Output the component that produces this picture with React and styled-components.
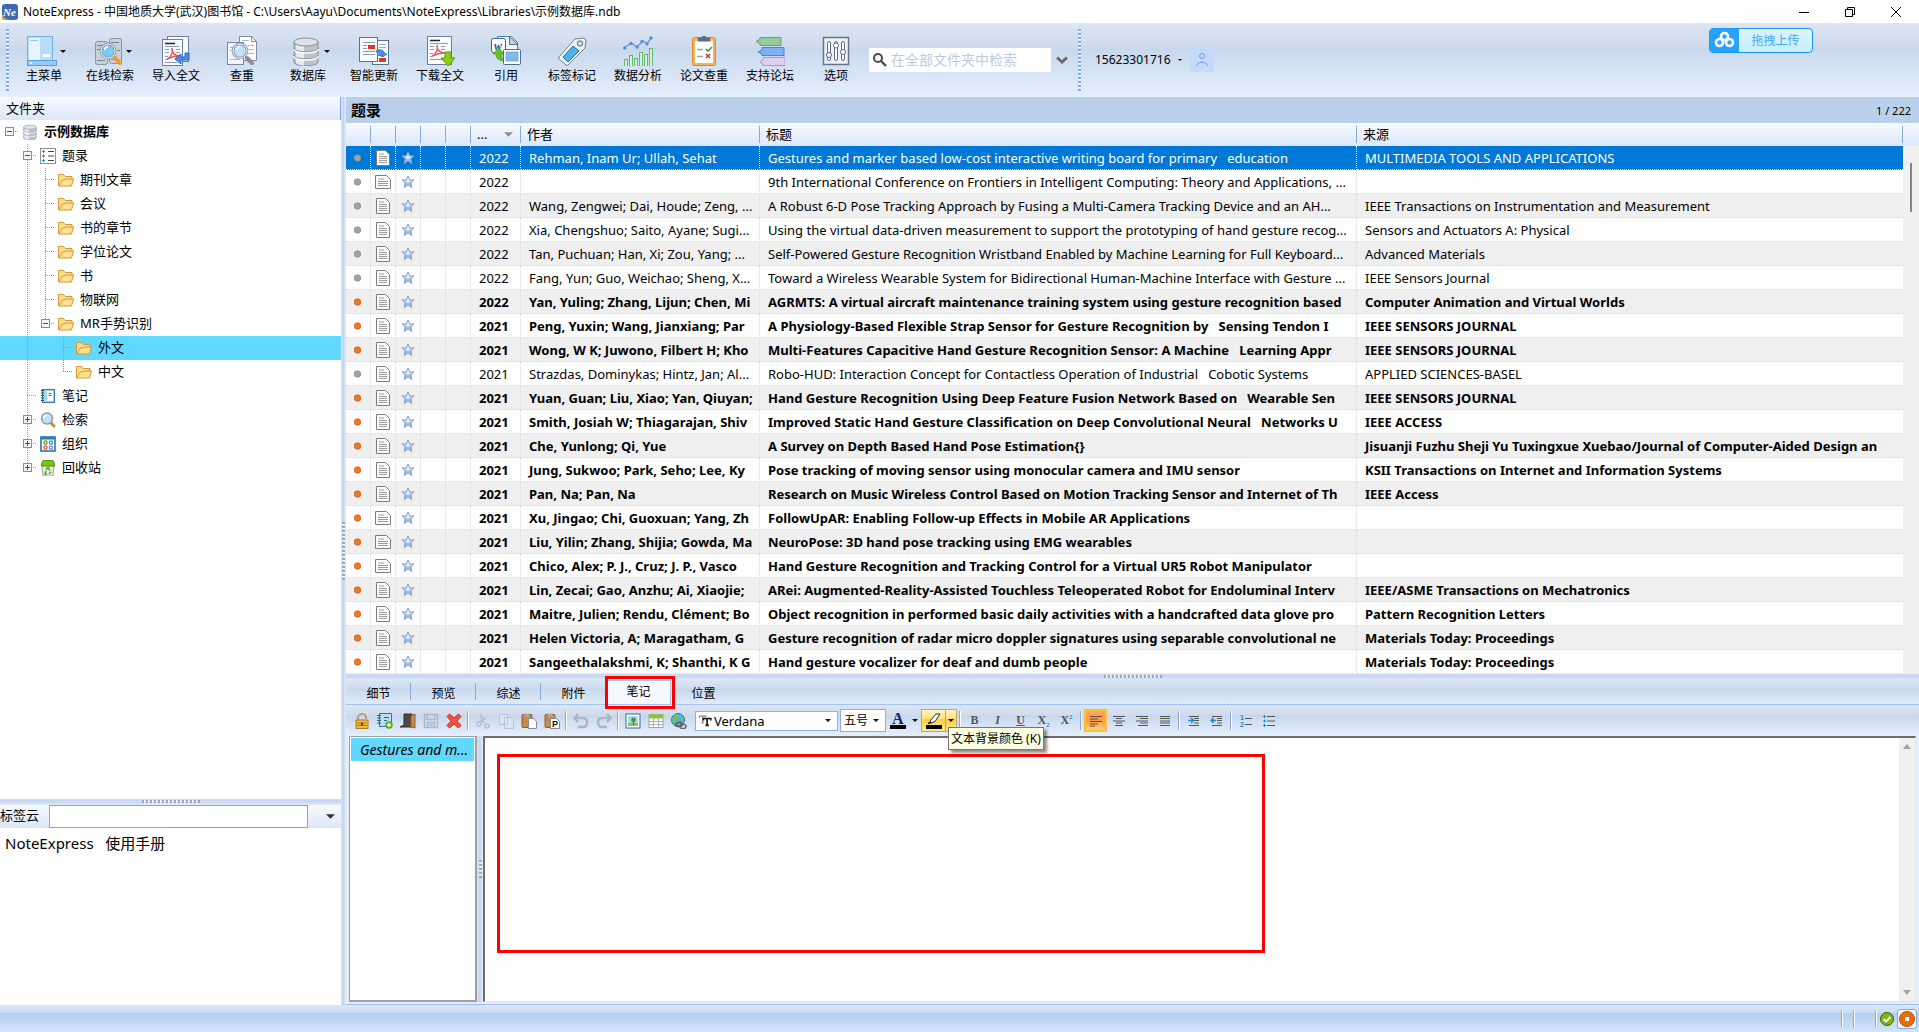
import styled, { createGlobalStyle, css } from "styled-components";

const GlobalStyle = createGlobalStyle`
  *{ box-sizing: border-box; }
  body{
    margin: 0;
    background: #fff;
    color: #000;
    font-family: "Noto Sans", "Noto Sans CJK SC", sans-serif;
    font-size: 13px;
  }
  button, input, select{
    font: inherit;
    color: inherit;
    padding: 0;
    margin: 0;
  }
  button{
    border: 0;
    background: none;
  }
  svg{ display: block; flex: none; }
`;

const glossy = css`
  background: linear-gradient(#dce6f3 0%, #cfdcee 32%, #c7d7ec 33%, #e5f0fd 100%);
`;

const AppStyled = styled.div`
  display: flex;
  flex-direction: column;
  height: 100vh;
  overflow: hidden;
`;

const TitleBar = styled.header`
  display: flex;
  align-items: center;
  flex: none;
  height: 23px;
  padding-left: 2px;
  h1{
    flex: 1;
    margin: 0;
    padding-left: 5px;
    font-size: 12px;
    font-weight: 400;
    line-height: 22px;
  }
`;

const WindowButton = styled.button`
  display: flex;
  justify-content: center;
  align-items: center;
  width: 46px;
  height: 21px;
`;

const Ribbon = styled.nav`
  ${glossy}
  position: relative;
  display: flex;
  align-items: center;
  flex: none;
  height: 74px;
  padding-left: 6px;
`;

const Grip = styled.span`
  flex: none;
  width: 3px;
  height: 62px;
  background: repeating-linear-gradient(#8aa9d6 0 2px, #fff 2px 3px, transparent 3px 4px);
`;

const RibbonItem = styled.button`
  display: flex;
  flex-direction: column;
  align-items: center;
  width: 66px;
  gap: 1px;
  font-size: 12px;
  line-height: 18px;
  white-space: nowrap;
  span{
    display: flex;
    align-items: center;
    gap: 3px;
    padding-left: ${(p) => (p.$menu ? 4 : 0)}px;
  }
`;

const RibbonItems = styled.div`
  display: flex;
  padding: 1px 0 0 2px;
`;

const SearchBox = styled.label`
  display: flex;
  align-items: center;
  width: 182px;
  height: 24px;
  padding-left: 4px;
  gap: 4px;
  background: #fff;
  input{
    flex: 1;
    min-width: 0;
    border: 0;
    outline: 0;
    font-size: 14px;
    line-height: 22px;
    background: none;
  }
  input::placeholder{ color: #bccadb; opacity: 1; }
`;

const ChevronButton = styled.button`
  width: 27px;
  padding-left: 5px;
`;

const Account = styled.button`
  display: flex;
  align-items: center;
  gap: 7px;
  padding: 0 8px 0 14px;
  font-size: 12px;
  line-height: 24px;
`;

const Avatar = styled.button`
  display: flex;
  justify-content: center;
  align-items: center;
  width: 24px;
  height: 24px;
  background: #c5d9fa;
`;

const UploadButton = styled.button`
  position: absolute;
  top: 5px;
  right: 106px;
  display: flex;
  width: 104px;
  height: 25px;
  border: 1px solid #1e97fb;
  border-radius: 4px;
  overflow: hidden;
  background: linear-gradient(#dff3fe, #c4ecfd);
  color: #43aaf8;
  font-size: 12px;
  line-height: 23px;
  svg{ background: #24a2fe; }
  span{ flex: 1; }
`;

const Main = styled.main`
  display: flex;
  flex: 1;
  min-height: 0;
`;

const Sidebar = styled.aside`
  display: flex;
  flex-direction: column;
  flex: none;
  width: 341px;
`;

const PanelHeader = styled.h2`
  flex: none;
  height: 23px;
  margin: 0;
  padding-left: 6px;
  background: linear-gradient(#f7faff, #dbe7f9);
  border-right: 1px solid #8aa9d6;
  font-size: 13px;
  font-weight: 400;
  line-height: 23px;
`;

const TreeList = styled.ul`
  flex: 1;
  min-height: 0;
  margin: 0;
  padding: 0;
  list-style: none;
  overflow: hidden;
`;

const TreeRow = styled.li`
  display: flex;
  align-items: center;
  height: 24px;
  background: ${(p) => (p.$selected ? "#61d8ff" : "none")};
  font-weight: ${(p) => (p.$root ? 700 : 400)};
  line-height: 22px;
  > svg:last-of-type{ margin: 0 6px 0 4px; }
  span{ height: 24px; }
`;

const Splitter = styled.div`
  display: flex;
  justify-content: center;
  flex: none;
  ${(p) =>
    p.$vertical
      ? css`
          align-items: center;
          width: ${p.$size}px;
          background: linear-gradient(90deg, #d5e3f6, #c3d6f0 50%, #e6effb);
        `
      : css`
          align-items: flex-start;
          height: 6px;
          padding-top: 1px;
          background: linear-gradient(#cbdbf0, #c5d7f0 40%, #e0eafa);
        `}
  &::after{
    content: "";
    ${(p) =>
      p.$vertical
        ? css`
            width: 3px;
            height: ${p.$grip}px;
            background: repeating-linear-gradient(#8aa9d6 0 2px, #fff 2px 3px, transparent 3px 4px);
          `
        : css`
            width: 58px;
            height: 3px;
            background: repeating-linear-gradient(90deg, #8aa9d6 0 2px, #fff 2px 3px, transparent 3px 4px);
          `}
  }
`;

const TagBar = styled.div`
  display: flex;
  align-items: center;
  flex: none;
  height: 23px;
  background: linear-gradient(#f7faff, #dbe7f9);
  line-height: 21px;
  label{ width: 49px; height: 23px; white-space: nowrap; }
  input{
    flex: 1;
    min-width: 0;
    height: 23px;
    border: 1px solid #a0a0a0;
    background: #fff;
  }
  button{
    display: flex;
    justify-content: center;
    width: 33px;
    padding-left: 11px;
  }
`;

const TagCloud = styled.div`
  flex: none;
  height: 177px;
  padding: 3px 5px;
  font-size: 15px;
  line-height: 24px;
  white-space: pre;
`;

const Content = styled.section`
  display: flex;
  flex-direction: column;
  flex: 1;
  min-width: 0;
`;

const ContentHeader = styled.div`
  display: flex;
  justify-content: space-between;
  align-items: center;
  flex: none;
  height: 26px;
  padding: 0 8px 0 5px;
  background: #bacfea;
  font-size: 11px;
  h2{
    margin: 0;
    font-size: 15px;
    font-weight: 700;
    line-height: 24px;
  }
`;

const RecordPane = styled.div`
  display: flex;
  flex: none;
  background: linear-gradient(#f7faff, #dbe7f9 23px, #f0f0f0 23px);
`;

const RecordTable = styled.table`
  flex: 1;
  min-width: 0;
  width: 100%;
  table-layout: fixed;
  border-spacing: 0;
  background: #fff;
  th{
    height: 23px;
    padding: 0 0 0 6px;
    background: linear-gradient(90deg, #8aa9d6, #8aa9d6) right 3px / 1px 17px no-repeat,
      linear-gradient(#f7faff, #dbe7f9);
    background-position: right 3px, 0 0;
    background-size: 1px 17px, 100% 100%;
    font-weight: 400;
    line-height: 23px;
    text-align: left;
  }
  th svg{ float: right; margin: 9px 8px 0 0; }
`;

const RecordRow = styled.tr`
  background: ${(p) => (p.$selected ? "#0078d7" : p.$odd ? "#efefef" : "#fff")};
  color: ${(p) => (p.$selected ? "#fff" : "#000")};
  font-weight: ${(p) => (p.$unread ? 700 : 400)};
  td{
    height: 24px;
    padding: 0 4px 0 8px;
    border-right: 1px dotted ${(p) => (p.$selected ? "#fff" : "#dcdcdc")};
    border-bottom: 1px dotted #dcdcdc;
    background-clip: padding-box;
    line-height: 22px;
    white-space: pre;
    overflow: hidden;
  }
  td:last-child{ border-right: 0; }
`;

const IconCell = styled.span`
  display: flex;
  justify-content: center;
  margin: 0 -4px 0 -8px;
`;

const Scrollbar = styled.div`
  display: flex;
  flex-direction: column;
  align-items: center;
  justify-content: space-between;
  flex: none;
  width: 16px;
  padding: ${(p) => p.$pad};
`;

const Thumb = styled.span`
  width: 2px;
  height: 49px;
  background: #858585;
`;

const TabBar = styled.div`
  display: flex;
  align-items: flex-end;
  flex: none;
  height: 25px;
  border-bottom: 1px solid #a3c4ee;
  background: linear-gradient(#dbe6f4, #c9d9ed 40%, #e0ebfa);
`;

const Tab = styled.button`
  position: relative;
  width: 65px;
  height: 24px;
  padding-top: 4px;
  font-size: 12px;
  line-height: 20px;
  ${(p) =>
    p.$divider &&
    css`
      background: linear-gradient(#8aa9d6, #8aa9d6) right 3px / 1px 17px no-repeat;
    `}
  ${(p) =>
    p.$active &&
    css`
      padding: 0 0 2px;
      border: 1px solid #a3c4ee;
      border-bottom: 0;
      background: #f5f9ff;
    `}
`;

const TabMark = styled.span`
  position: absolute;
  inset: -5px -5px -5px -2px;
  border: 3px solid #f00;
`;

const EditorBar = styled.div`
  ${glossy}
  display: flex;
  align-items: center;
  flex: none;
  height: 31px;
  padding-left: 4px;
`;

const ToolButton = styled.button`
  display: flex;
  justify-content: center;
  align-items: center;
  width: 23px;
  height: 23px;
  ${(p) =>
    p.$active &&
    css`
      border: 2px solid #f5c33b;
      background: linear-gradient(#fda95f, #fb9a3e 50%, #fdd27e);
    `}
`;

const SplitTool = styled.div`
  position: relative;
  display: flex;
  align-items: center;
  width: 35px;
  height: 23px;
  ${(p) =>
    p.$hot &&
    css`
      width: 36px;
      border: 1px solid #c2a661;
      background: linear-gradient(#fff5c9, #ffe17a 40%, #ffcf3f 45%, #ffe98f);
      button + button{ border-left: 1px solid #c2a661; height: 21px; }
    `}
  > button + button{
    display: flex;
    justify-content: center;
    align-items: center;
    width: 11px;
  }
`;

const Separator = styled.i`
  width: 2px;
  height: 19px;
  margin: 0 2px;
  border-left: 1px solid #8aa9d6;
  background: #fff;
`;

const ComboBox = styled.label`
  display: flex;
  align-items: center;
  width: ${(p) => p.$width}px;
  height: ${(p) => p.$height}px;
  margin-left: ${(p) => p.$gap}px;
  padding: 0 6px 0 3px;
  gap: 2px;
  border: 1px solid #8fb0de;
  background: #fff;
  select{
    flex: 1;
    min-width: 0;
    border: 0;
    padding: 0;
    outline: 0;
    appearance: none;
    background: none;
    font-size: ${(p) => p.$font}px;
  }
`;

const Tooltip = styled.span`
  position: absolute;
  top: 17px;
  left: 26px;
  z-index: 2;
  padding: 0 2px;
  border: 1px solid #767676;
  background: #ffffe1;
  box-shadow: 3px 3px 3px rgba(0, 0, 0, .45);
  font-size: 12px;
  line-height: 21px;
  white-space: nowrap;
`;

const NotesArea = styled.div`
  display: flex;
  flex: 1;
  min-height: 0;
  padding: 0 3px 2px 3px;
  background: #e3edfb;
  border-bottom: 1px solid #9fc0ee;
`;

const NoteList = styled.ul`
  flex: none;
  width: 128px;
  margin: 0;
  padding: 1px;
  border: 1px solid #a0a0a0;
  border-right-width: 2px;
  border-bottom-width: 2px;
  background: #fff;
  list-style: none;
`;

const NoteItem = styled.li`
  height: 23px;
  padding-left: 9px;
  background: #61d8ff;
  font-size: 14px;
  font-style: italic;
  line-height: 23px;
  white-space: nowrap;
`;

const Editor = styled.div`
  display: flex;
  flex: 1;
  min-width: 0;
  border: 1px solid #e3e3e3;
  border-top: 2px solid #6d6d6d;
  border-left: 2px solid #6d6d6d;
  background: linear-gradient(#f0f0f0, #f0f0f0) right / 16px 100% no-repeat, #fff;
`;

const Page = styled.div`
  flex: 1;
  min-width: 0;
  padding: 16px 0 0 12px;
`;

const PageMark = styled.div`
  width: 768px;
  max-width: 100%;
  height: 199px;
  border: 3px solid #f00;
`;

const StatusBar = styled.footer`
  display: flex;
  justify-content: flex-end;
  align-items: center;
  flex: none;
  height: 27px;
  padding-right: 2px;
  background: linear-gradient(#dbe7f7 0, #c8daf3 8px, #b1cef3 8px, #d5e4f8 100%);
`;

const StatusCell = styled.span`
  width: ${(p) => p.$width}px;
  height: 17px;
  border-left: 1px solid #8aa9d6;
  box-shadow: inset 1px 0 #fff;
`;

const StatusButton = styled.button`
  display: flex;
  justify-content: center;
  align-items: center;
  width: 20px;
  height: 20px;
  border: ${(p) => (p.$boxed ? "1px solid #8aa9d6" : "0")};
  border-radius: 3px;
  background: ${(p) => (p.$boxed ? "#f3f7fd" : "none")};
`;

const Arrow = ({ w = 6, color = "#111" }) => (
  <svg width={w} height={Math.ceil(w / 2)} viewBox="0 0 6 3">
    <path d="M0 0h6L3 3z" fill={color} />
  </svg>
);

const Icon = ({ size = 30, children, box = size }) => (
  <svg width={size} height={size} viewBox={`0 0 ${box} ${box}`} fill="none" aria-hidden="true">
    {children}
  </svg>
);

const Paper = ({ x = 3, y = 2, w = 21, h = 27 }) => (
  <>
    <rect x={x + 0.5} y={y + 0.5} width={w} height={h} fill="#fbfcff" stroke="#6b7f9c" />
    <path d={`M${x + 3} ${y + 4.5}h10`} stroke="#222" strokeWidth="1.500" />
    <path
      d={`M${x + 3} ${y + 7.5}h${w - 6}M${x + 3} ${y + 10.5}h4M${x + 3} ${y + 13.5}h4M${x + 14} ${y + 10.5}h4M${x + 14} ${y + 13.5}h4M${x + 3} ${y + 17.5}h3M${x + 3} ${y + 20.5}h3M${x + 3} ${y + 23.5}h12`}
      stroke="#8c9cb5"
    />
    <path
      d={`M${x + 5} ${y + 20}c4-2 6-6 5-11c0 5 3 8 8 8c-5 0-9 1-13 3z`}
      stroke="#e8585a"
      strokeWidth="1.400"
    />
  </>
);

const Lens = ({ cx, cy, r, fill = "#6fcdf6", handle = "#f59a2a" }) => (
  <>
    <path d={`M${cx + r} ${cy + r}l5 5`} stroke={handle} strokeWidth="4" strokeLinecap="round" />
    <circle cx={cx} cy={cy} r={r} fill={fill} fillOpacity=".9" stroke="#8492a4" strokeWidth="2.600" />
    <circle cx={cx} cy={cy} r={r} stroke="#f4f8fc" />
    <path d={`M${cx - r / 2} ${cy - 1}q1-${r / 2} ${r / 2}-${r / 2}`} stroke="#fff" strokeWidth="1.500" />
  </>
);

const Cylinder = () => (
  <>
    <path d="M3 6v20c0 5 24 5 24 0V6" fill="#bcc3cc" stroke="#868e99" />
    <path d="M5 8v19c2 2 7 2.500 8 2.500V10z" fill="#e8ecf0" />
    <ellipse cx="15" cy="6" rx="12" ry="4" fill="#dfe3e8" stroke="#868e99" />
    <path d="M3 13c0 5 24 5 24 0M3 20c0 5 24 5 24 0" stroke="#fff" strokeWidth="2" />
    <path d="M3 12c0 5 24 5 24 0M3 19c0 5 24 5 24 0" stroke="#8b939e" />
  </>
);

const ribbonIcons = {
  menu: (
    <>
      <rect x="0.500" y="0.500" width="25" height="24" fill="#b9dcfb" stroke="#77b1e4" />
      <rect x="2" y="2" width="11" height="22" fill="#e7f5ff" />
      <path d="M3 4.500h8" stroke="#8ec5f2" />
      <rect x="16" y="18" width="7" height="3" fill="#fff" />
      <rect x="0.500" y="24.500" width="29" height="5" fill="#93cbf8" stroke="#5d9fd8" />
      <circle cx="4" cy="27" r="1" fill="#fff" />
    </>
  ),
  online: (
    <>
      <rect x="2.500" y="5.500" width="12" height="23" rx="2" fill="#c8d0d9" stroke="#8b96a3" />
      <rect x="16.500" y="2.500" width="12" height="25" rx="2" fill="#c8d0d9" stroke="#8b96a3" />
      <path d="M4 9.500h8M4 13.500h8M4 24.500h8M18 6.500h8M18 23.500h8M24 14.500h3" stroke="#77828f" />
      <Lens cx={15} cy={15} r={7} />
    </>
  ),
  import: (
    <>
      <rect x="6.500" y="0.500" width="21" height="25" fill="#fbfcff" stroke="#6b7f9c" />
      <Paper x={1} y={3} w={20} h={26} />
      <path d="M28 17v7h-8v4l-6-5 6-5v3h4v-4z" fill="#4d8bea" stroke="#2c60bd" />
    </>
  ),
  check: (
    <>
      <path d="M12.500 0.500h12l5 5v19h-17z" fill="#fdfdff" stroke="#7b8ba3" />
      <path d="M24.500 0.500v5h5" stroke="#7b8ba3" />
      <rect x="0.500" y="6.500" width="16" height="22" fill="#f3f6fb" stroke="#7b8ba3" />
      <path d="M3 11.500h8M3 14.500h6M3 23.500h10M15 4.500h7M20 9.500h7M20 13.500h7M20 17.500h7" stroke="#aab8cc" />
      <Lens cx={13} cy={15} r={7} fill="#bfe0f6" handle="#8c8c8c" />
    </>
  ),
  database: <Cylinder />,
  update: (
    <>
      <rect x="13.500" y="4.500" width="16" height="24" fill="#fbfcff" stroke="#5f7089" />
      <rect x="20" y="22" width="7" height="4" fill="#dd3a1a" />
      <path d="M20 8.500h7M20 11.500h7M16 23.500h3" stroke="#9babc4" />
      <rect x="0.500" y="1.500" width="18" height="24" fill="#fbfcff" stroke="#5f7089" />
      <path d="M4 6.500h12M4 9.500h4M4 12.500h4M4 15.500h12M4 18.500h12" stroke="#8c9cb5" />
      <rect x="9" y="9" width="7" height="4" fill="#dd3a1a" />
      <path d="M18 14c5-1 7 1 8 4h2l-4 3-5-2h2c-1-2-2-3-4-3z" fill="#4d8bea" stroke="#2c60bd" strokeWidth=".7" />
    </>
  ),
  download: (
    <>
      <Paper x={2} y={0} w={24} h={28} />
      <path d="M20 16h6v6h4l-7 8-7-8h4z" fill="#8bcf14" stroke="#5b9a0b" />
    </>
  ),
  cite: (
    <>
      <path d="M6.500 0.500h14l6 6v11h-20z" fill="#f5f9ff" stroke="#54739c" />
      <path d="M18.500 0.500v8h8z" fill="#bcd4ef" stroke="#54739c" />
      <rect x="0.500" y="2.500" width="14" height="14" rx="2" fill="#fff" stroke="#3a5eae" />
      <text x="3" y="14" fontSize="12" fontWeight="700" fontStyle="italic" fill="#2b4ea2" fontFamily="Liberation Serif">w</text>
      <path d="M8 12l5 6h-3c0 3 2 6 4 7-6 0-9-3-9-7H2z" fill="#67c419" stroke="#3f8e10" strokeWidth=".7" />
      <rect x="12.500" y="13.500" width="17" height="15" rx="1" fill="#fff" stroke="#4a6b94" />
      <rect x="15" y="16" width="12" height="9" fill="#7dbbe9" stroke="#5c8ebb" strokeWidth=".6" />
    </>
  ),
  tag: (
    <>
      <path d="M2 21L18 3l9-1 2 3-1 7L11 29q-1 1-2 0l-7-6q-1-1 0-2z" fill="#f1f3f7" stroke="#77818e" />
      <circle cx="23" cy="7.500" r="2.500" fill="#dfe7f1" stroke="#8b93a0" strokeWidth="1.500" />
      <path d="M6 21L16 10l6 5-11 11z" fill="#4fb2ea" stroke="#1b6fae" />
    </>
  ),
  stats: (
    <>
      <path d="M1 12l7-5 6 4 6-6 4 3 4-6" stroke="#6b97da" strokeWidth="1.400" />
      <g fill="#5b8cd8">
        <circle cx="1.700" cy="12" r="1.700" /><circle cx="8" cy="7.500" r="1.700" /><circle cx="14" cy="11" r="1.700" />
        <circle cx="19" cy="5.500" r="1.700" /><circle cx="24" cy="8" r="1.700" /><circle cx="28" cy="2" r="1.700" />
      </g>
      <g fill="#d6f0d3" stroke="#65b877">
        <rect x="1.500" y="23.500" width="3" height="7" /><rect x="6.500" y="19.500" width="3" height="11" />
        <rect x="11.500" y="22.500" width="3" height="8" /><rect x="16.500" y="16.500" width="3" height="14" />
        <rect x="21.500" y="18.500" width="3" height="12" /><rect x="26.500" y="12.500" width="3" height="18" />
      </g>
    </>
  ),
  clipboard: (
    <>
      <rect x="3.500" y="1.500" width="23" height="28" rx="2" fill="#f4b25c" stroke="#d98b2b" />
      <rect x="6" y="5" width="18" height="22" fill="#fff" />
      <path d="M9 1.500h4a2 2 0 0 1 4 0h4v4H9z" fill="#5d6c83" />
      <path d="M8 13.500h6M8 20.500h6" stroke="#9aa5b4" strokeWidth="1.500" />
      <path d="M17 13l2 2 4-4" stroke="#32a35b" strokeWidth="1.600" />
      <path d="M17 18l4 4m0-4l-4 4" stroke="#dd3333" strokeWidth="1.600" />
    </>
  ),
  forum: (
    <>
      <path d="M1 5.500l4-2V1.500h21v8H5V7.500z" fill="#93cb9b" stroke="#5fa56c" />
      <path d="M3 16l4-2v-2.500h22v8H7V18z" fill="#80b0ef" stroke="#4d84cc" />
      <path d="M5 26l3-2v-2.500h22v8H8V28z" fill="#dccff0" stroke="#ab94cf" />
    </>
  ),
  options: (
    <>
      <rect x="2.500" y="1.500" width="25" height="27" fill="#eef2f8" stroke="#65748b" strokeWidth="1.500" />
      <g fill="#fff" stroke="#5c6b82">
        <rect x="6.500" y="5.500" width="3" height="19" rx="1.500" /><rect x="13.500" y="5.500" width="3" height="19" rx="1.500" />
        <rect x="20.500" y="5.500" width="3" height="19" rx="1.500" />
        <circle cx="8" cy="19" r="2.500" /><circle cx="15" cy="9.500" r="2.500" /><circle cx="22" cy="16" r="2.500" />
      </g>
    </>
  ),
};

const ribbon = [
  ["menu", "主菜单", true],
  ["online", "在线检索", true],
  ["import", "导入全文"],
  ["check", "查重"],
  ["database", "数据库", true],
  ["update", "智能更新"],
  ["download", "下载全文"],
  ["cite", "引用"],
  ["tag", "标签标记"],
  ["stats", "数据分析"],
  ["clipboard", "论文查重"],
  ["forum", "支持论坛"],
  ["options", "选项"],
];

const treeIcons = {
  database: <g transform="scale(.53)"><Cylinder /></g>,
  list: (
    <>
      <rect x="0.500" y="0.500" width="15" height="15" fill="#fff" stroke="#909090" />
      <path d="M8 3.500h6M8 8h6M8 12.500h6" stroke="#444" />
      <path d="M3.500 2v3M3.500 6.500v3M3.500 11v3M2 3.500h3M2 8h3M2 12.500h3" stroke="#2e87c8" />
    </>
  ),
  folder: (
    <>
      <path d="M0.500 14V2.500h5l1.500 2h7V7" fill="#fbdc8c" stroke="#d29a3c" />
      <path d="M0.500 14L4 8.500l4-1.500h7.500l-2 7z" fill="#ffe08a" stroke="#d29a3c" />
    </>
  ),
  note: (
    <>
      <rect x="2.500" y="1.500" width="12" height="13" fill="#a9d4ef" stroke="#2f79ad" />
      <rect x="7" y="3" width="6" height="10" fill="#fff" />
      <path d="M8.500 5.500h3M8.500 7.500h3" stroke="#2f79ad" />
      <path d="M1 2.500h3M1 5h3M1 7.500h3M1 10h3M1 12.500h3" stroke="#345" />
    </>
  ),
  search: (
    <>
      <path d="M11 11l3 3" stroke="#c68a45" strokeWidth="3" strokeLinecap="round" />
      <circle cx="7" cy="6.500" r="5.500" fill="#bfe4f9" stroke="#8e99a5" strokeWidth="1.400" />
      <path d="M4 6q0-3 3-3" stroke="#fff" strokeWidth="1.400" />
    </>
  ),
  group: (
    <>
      <rect x="1" y="1" width="14" height="14" fill="#fff" stroke="#1f77ad" strokeWidth="1.600" />
      <path d="M1 2.500h14" stroke="#1f77ad" strokeWidth="2" />
      <circle cx="5.500" cy="6.500" r="1.600" stroke="#5b9a1a" strokeWidth="1.300" />
      <circle cx="11" cy="6.500" r="1.600" stroke="#3a8fd0" strokeWidth="1.300" />
      <circle cx="5.500" cy="11.500" r="1.600" stroke="#e0502e" strokeWidth="1.300" />
      <circle cx="11" cy="11.500" r="1.600" stroke="#8d6fd1" strokeWidth="1.300" />
    </>
  ),
  bin: (
    <>
      <path d="M2 6h12l-1 10H3z" fill="#e6ebe4" stroke="#9aa496" />
      <path d="M1.500 3.500l1.500-3h10l1.500 3v2.500h-13z" fill="#79c116" stroke="#579a0d" />
      <path d="M8 7.500l2 3M11 12l-2 2M7 14H5l1-3M6 10l2-2.500" stroke="#58a01b" strokeWidth="1.400" />
    </>
  ),
};

// guides: one letter per indent level, the last one belongs to the node itself
const tree = [
  ["r", "database", "示例数据库"],
  [" -", "list", "题录"],
  [" |t", "folder", "期刊文章"],
  [" |t", "folder", "会议"],
  [" |t", "folder", "书的章节"],
  [" |t", "folder", "学位论文"],
  [" |t", "folder", "书"],
  [" |t", "folder", "物联网"],
  [" |m", "folder", "MR手势识别"],
  [" | t", "folder", "外文"],
  [" | e", "folder", "中文"],
  [" t", "note", "笔记"],
  [" +", "search", "检索"],
  [" +", "group", "组织"],
  [" p", "bin", "回收站"],
];

const Guide = ({ kind }) => {
  const box = "r-m+p".includes(kind);
  return (
    <svg width="18" height="24" viewBox="0 0 18 24" shapeRendering="crispEdges">
      <g stroke={kind === " " ? "none" : "#9a9a9a"} strokeDasharray="1 1">
        {"|t-+".includes(kind) && <path d="M9.500 0v24" />}
        {"emp".includes(kind) && <path d="M9.500 0v12" />}
        {kind !== "|" && <path d="M9 11.500h9" />}
      </g>
      {box && (
        <>
          <rect x="5.500" y="7.500" width="8" height="8" fill="#f4f4f4" stroke="#8c8c8c" />
          <path d={"+p".includes(kind) ? "M7 11.500h5M9.500 9v5" : "M7 11.500h5"} stroke="#2f4f9f" />
        </>
      )}
    </svg>
  );
};

// year, authors, title, source, unread, landscape icon
const records = [
  ["2022", "Rehman, Inam Ur; Ullah, Sehat", "Gestures and marker based low-cost interactive writing board for primary   education", "MULTIMEDIA TOOLS AND APPLICATIONS", 0],
  ["2022", "", "9th International Conference on Frontiers in Intelligent Computing: Theory and Applications, ...", "", 0, 1],
  ["2022", "Wang, Zengwei; Dai, Houde; Zeng, ...", "A Robust 6-D Pose Tracking Approach by Fusing a Multi-Camera Tracking Device and an AH...", "IEEE Transactions on Instrumentation and Measurement", 0],
  ["2022", "Xia, Chengshuo; Saito, Ayane; Sugi...", "Using the virtual data-driven measurement to support the prototyping of hand gesture recog...", "Sensors and Actuators A: Physical", 0],
  ["2022", "Tan, Puchuan; Han, Xi; Zou, Yang; ...", "Self-Powered Gesture Recognition Wristband Enabled by Machine Learning for Full Keyboard...", "Advanced Materials", 0],
  ["2022", "Fang, Yun; Guo, Weichao; Sheng, X...", "Toward a Wireless Wearable System for Bidirectional Human-Machine Interface with Gesture ...", "IEEE Sensors Journal", 0],
  ["2022", "Yan, Yuling; Zhang, Lijun; Chen, Mi", "AGRMTS: A virtual aircraft maintenance training system using gesture recognition based", "Computer Animation and Virtual Worlds", 1],
  ["2021", "Peng, Yuxin; Wang, Jianxiang; Par", "A Physiology-Based Flexible Strap Sensor for Gesture Recognition by   Sensing Tendon I", "IEEE SENSORS JOURNAL", 1],
  ["2021", "Wong, W K; Juwono, Filbert H; Kho", "Multi-Features Capacitive Hand Gesture Recognition Sensor: A Machine   Learning Appr", "IEEE SENSORS JOURNAL", 1],
  ["2021", "Strazdas, Dominykas; Hintz, Jan; Al...", "Robo-HUD: Interaction Concept for Contactless Operation of Industrial   Cobotic Systems", "APPLIED SCIENCES-BASEL", 0],
  ["2021", "Yuan, Guan; Liu, Xiao; Yan, Qiuyan;", "Hand Gesture Recognition Using Deep Feature Fusion Network Based on   Wearable Sen", "IEEE SENSORS JOURNAL", 1],
  ["2021", "Smith, Josiah W; Thiagarajan, Shiv", "Improved Static Hand Gesture Classification on Deep Convolutional Neural   Networks U", "IEEE ACCESS", 1],
  ["2021", "Che, Yunlong; Qi, Yue", "A Survey on Depth Based Hand Pose Estimation{}", "Jisuanji Fuzhu Sheji Yu Tuxingxue Xuebao/Journal of Computer-Aided Design an", 1],
  ["2021", "Jung, Sukwoo; Park, Seho; Lee, Ky", "Pose tracking of moving sensor using monocular camera and IMU sensor", "KSII Transactions on Internet and Information Systems", 1],
  ["2021", "Pan, Na; Pan, Na", "Research on Music Wireless Control Based on Motion Tracking Sensor and Internet of Th", "IEEE Access", 1],
  ["2021", "Xu, Jingao; Chi, Guoxuan; Yang, Zh", "FollowUpAR: Enabling Follow-up Effects in Mobile AR Applications", "", 1, 1],
  ["2021", "Liu, Yilin; Zhang, Shijia; Gowda, Ma", "NeuroPose: 3D hand pose tracking using EMG wearables", "", 1, 1],
  ["2021", "Chico, Alex; P. J., Cruz; J. P., Vasco", "Hand Gesture Recognition and Tracking Control for a Virtual UR5 Robot Manipulator", "", 1, 1],
  ["2021", "Lin, Zecai; Gao, Anzhu; Ai, Xiaojie;", "ARei: Augmented-Reality-Assisted Touchless Teleoperated Robot for Endoluminal Interv", "IEEE/ASME Transactions on Mechatronics", 1],
  ["2021", "Maitre, Julien; Rendu, Clément; Bo", "Object recognition in performed basic daily activities with a handcrafted data glove pro", "Pattern Recognition Letters", 1],
  ["2021", "Helen Victoria, A; Maragatham, G", "Gesture recognition of radar micro doppler signatures using separable convolutional ne", "Materials Today: Proceedings", 1],
  ["2021", "Sangeethalakshmi, K; Shanthi, K G", "Hand gesture vocalizer for deaf and dumb people", "Materials Today: Proceedings", 1],
];

const Dot = ({ unread }) => (
  <svg width="8" height="8" viewBox="0 0 8 8">
    <circle cx="3.500" cy="4" r="3.200" fill={unread ? "#f97b0e" : "#a3a3a3"} stroke={unread ? "#d0572e" : "#8c8c8c"} strokeWidth=".8" />
  </svg>
);

const Doc = ({ wide }) => (
  <Icon size={16}>
    {wide ? (
      <>
        <path d="M0.500 1.500h11l4 4v9H0.500z" fill="#fdfdfd" stroke="#7d7d7d" />
        <path d="M3 5h6M3 7.500h10M3 9.500h10M3 11.500h10" stroke="#9a9a9a" />
      </>
    ) : (
      <>
        <path d="M1.500 0.500h9l4 4v11h-13z" fill="#fdfdfd" stroke="#7d7d7d" />
        <path d="M4 4h5M4 6.500h8M4 8.500h8M4 10.500h8M4 12.500h8" stroke="#9a9a9a" />
      </>
    )}
  </Icon>
);

const Star = () => (
  <Icon size={14}>
    <path d="M7 1l1.700 4H13L9.800 7.800l1.200 4.700-4-2.500-4 2.500 1.200-4.700L1 5h4.300z" fill="#9dbfea" stroke="#86a3cd" />
    <path d="M7 2.500l1.200 3.200h3L8 7.500H6L2.800 5.700h3z" fill="#eaf4ff" />
  </Icon>
);

const widths = [25, 25, 25, 25, 25, 50, 239, 597, null];

const RecordList = () => (
  <RecordPane>
    <RecordTable>
      <colgroup>
        {widths.map((w, i) => (
          <col key={i} width={w || undefined} />
        ))}
      </colgroup>
      <thead>
        <tr>
          <th></th><th></th><th></th><th></th><th></th>
          <th>...<Arrow w={9} color="#8d8d8d" /></th>
          <th>作者</th>
          <th>标题</th>
          <th>来源</th>
        </tr>
      </thead>
      <tbody>
        {records.map(([year, authors, title, source, unread, wide], i) => (
          <RecordRow key={i} $selected={i === 0} $odd={i % 2 === 0} $unread={unread}>
            <td><Dot unread={unread} /></td>
            <td><IconCell><Doc wide={wide} /></IconCell></td>
            <td><IconCell><Star /></IconCell></td>
            <td></td>
            <td></td>
            <td>{year}</td>
            <td>{authors}</td>
            <td>{title}</td>
            <td>{source}</td>
          </RecordRow>
        ))}
      </tbody>
    </RecordTable>
    <Scrollbar $pad="40px 0 0">
      <Thumb />
    </Scrollbar>
  </RecordPane>
);

const tools = {
  lock: (
    <>
      <path d="M4 7V4.500a4 3.500 0 0 1 8 0V6" stroke="#b5a177" strokeWidth="2" />
      <rect x="2" y="7" width="12" height="8.500" fill="#f5b93a" stroke="#b57b16" />
      <path d="M3 10h10M3 12.500h10" stroke="#b57b16" /><path d="M8 9.500v3" stroke="#543" strokeWidth="2" />
    </>
  ),
  notebook: (
    <>
      <rect x="2.500" y="0.500" width="12" height="13" fill="#b9ddf5" stroke="#2f79ad" />
      <path d="M0 2.500h4M0 5h4M0 7.500h4M0 10h4M7 4.500h5M7 7.500h3" stroke="#2f5f85" />
      <circle cx="12" cy="12" r="3.800" fill="#5fae22" /><path d="M10 12h4M12 10v4" stroke="#fff" strokeWidth="1.400" />
    </>
  ),
  door: (
    <>
      <path d="M4 1h8v13H0l4-2z" fill="#4d4745" stroke="#35302e" />
      <path d="M11 3l4-2v14l-4-1z" fill="#c88a4a" stroke="#93602b" />
    </>
  ),
  save: (
    <path d="M1.500 1.500h13v13h-13zM4 1.500v5h8v-5M4.500 14.500v-5h7v5M6 12h4" stroke="#aab8c9" strokeWidth="1.500" />
  ),
  remove: (
    <path d="M3.500 1L8 5l4.500-4L15 3.500 11 8l4 4.500-2.500 2.500L8 11l-4.500 4L1 12.500 5 8 1 3.500z" fill="#ee5240" stroke="#c5352a" />
  ),
  cut: (
    <>
      <path d="M5 1l4 9M11 5L4 9" stroke="#b5c1d0" strokeWidth="2" />
      <circle cx="4" cy="11" r="2" stroke="#b5c1d0" strokeWidth="1.500" /><circle cx="12" cy="13" r="2" stroke="#b5c1d0" strokeWidth="1.500" />
    </>
  ),
  copy: <path d="M1.500 1.500h8v10h-8zM6.500 4.500h6l3 3v8h-9z" fill="#dbe5f2" stroke="#b5c4d8" />,
  paste: (
    <>
      <rect x="1" y="1.500" width="10" height="13" rx="1" fill="#c58a4b" stroke="#8e5d2a" />
      <rect x="3.500" y="0.500" width="5" height="3" fill="#aaa" />
      <path d="M7.500 5.500h5l3 3v7h-8z" fill="#fcfcfc" stroke="#8a8a8a" />
    </>
  ),
  pasteText: (
    <>
      <rect x="1" y="1.500" width="10" height="13" rx="1" fill="#c58a4b" stroke="#8e5d2a" />
      <rect x="3.500" y="0.500" width="5" height="3" fill="#aaa" />
      <path d="M6.500 5.500h6l3 3v7h-9z" fill="#fcfcfc" stroke="#8a8a8a" />
      <text x="8" y="14" fontSize="9" fontWeight="700" fill="#111" fontFamily="Liberation Sans">P</text>
    </>
  ),
  undo: <path d="M5 1L1.500 5 5 9M2 5h8q4 0 4 4.500T10 14H5" stroke="#a9b7c9" strokeWidth="2.500" />,
  redo: <path d="M11 1l3.500 4L11 9M14 5H6Q2 5 2 9.500T6 14h5" stroke="#a9b7c9" strokeWidth="2.500" />,
  image: (
    <>
      <rect x="1" y="1" width="14" height="14" fill="#fff" stroke="#35698f" />
      <rect x="3" y="3" width="10" height="10" fill="#a8dcf7" />
      <path d="M3 10h10v3H3z" fill="#8ac440" /><path d="M8.500 8v4" stroke="#754" /><circle cx="8.500" cy="7" r="2.400" fill="#3f9a2d" /><circle cx="4.800" cy="5" r="1" fill="#f5c33b" />
    </>
  ),
  table: (
    <>
      <rect x="1" y="1.500" width="14" height="13" fill="#fff" stroke="#9fae8c" />
      <rect x="1" y="1.500" width="14" height="4" fill="#8cc63c" />
      <path d="M1 8.500h14M1 11.500h14M5.500 5v10M10.500 5v10" stroke="#a9b0b8" />
    </>
  ),
  globe: (
    <>
      <circle cx="7" cy="7" r="6.500" fill="#52b4ea" stroke="#2a78b5" />
      <path d="M3 2q4-2 5 1l-3 3 2 3-3 2Q0 8 3 2zM10 3l3 3-2 3z" fill="#7cc63a" />
      <rect x="5" y="9.500" width="6" height="4" rx="2" stroke="#555" strokeWidth="1.500" /><rect x="9" y="11.500" width="6" height="4" rx="2" stroke="#666" strokeWidth="1.500" />
    </>
  ),
  fontFace: (
    <>
      <path d="M0.500 5V2.500h9M4.500 2.500V11M3 11h3" stroke="#888" strokeWidth="1.500" />
      <path d="M5.500 8V5.500h9V8M10 5.500V14M8 14h4" stroke="#111" strokeWidth="2" />
    </>
  ),
  color: (
    <>
      <text x="2" y="11" fontSize="16" fontWeight="700" fill="#14207a" fontFamily="Liberation Serif">A</text>
      <rect x="0" y="12" width="16" height="4" fill="#000" />
    </>
  ),
  highlight: (
    <>
      <path d="M4 8l6-7h4L9 8.500l-4 1.500z" fill="#fff" stroke="#1b2a5f" /><path d="M2 10.500l3-1" stroke="#111" strokeWidth="1.500" />
      <rect x="0" y="12" width="16" height="4" fill="#000" />
    </>
  ),
  left: <path d="M2 3.500h12M2 6h8M2 8.500h12M2 11h8M2 13h5" stroke="#6d4a2b" />,
  center: <path d="M2 3.500h12M5 5.500h6M2 8h12M5 10h6M4 12.500h8" stroke="#555" />,
  right: <path d="M2 3.500h12M6 5.500h8M2 8h12M6 10h8M4 12.500h10" stroke="#555" />,
  justify: <path d="M3 3.500h10M3 5.500h10M3 8h10M3 10h10M3 12.500h10" stroke="#555" />,
  outdent: (
    <>
      <path d="M3 3.500h10M8 5.500h5M8 7.500h5M8 10h5M3 12.500h10" stroke="#555" /><path d="M7 7.500H2M5 5l2.500 2.500L5 10" stroke="#2488cc" strokeWidth="1.500" />
    </>
  ),
  indent: (
    <>
      <path d="M3 3.500h10M8 5.500h5M8 7.500h5M8 10h5M3 12.500h10" stroke="#555" /><path d="M7 7.500H2M4.500 5L2 7.500 4.500 10" stroke="#2488cc" strokeWidth="1.500" />
    </>
  ),
  numbered: (
    <>
      <text x="2" y="7" fontSize="7" fontWeight="700" fill="#2488cc" fontFamily="Liberation Sans">1</text>
      <text x="2" y="14" fontSize="7" fontWeight="700" fill="#2488cc" fontFamily="Liberation Sans">2</text>
      <path d="M7 5.500h7M7 11.500h7" stroke="#555" />
    </>
  ),
  bullets: (
    <>
      <path d="M6 3.500h8M6 8h8M6 12.500h8" stroke="#555" /><path d="M2 3.500h3M2 8h3M2 12.500h3M3.500 2v3M3.500 6.500v3M3.500 11v3" stroke="#2488cc" />
    </>
  ),
};

const Letter = styled.span`
  color: #555;
  font-family: "Liberation Serif", serif;
  font-size: 12px;
  font-weight: 700;
  sub, sup{
    color: #2488cc;
    font-size: 7px;
    line-height: 0;
  }
`;

const Tool = ({ name, label, active }) => (
  <ToolButton aria-label={label || name} $active={active}>
    <Icon size={16}>{tools[name]}</Icon>
  </ToolButton>
);

const EditorToolbar = () => (
  <EditorBar>
    {["lock", "notebook", "door", "save", "remove"].map((t) => <Tool key={t} name={t} />)}
    <Separator />
    {["cut", "copy", "paste", "pasteText"].map((t) => <Tool key={t} name={t} />)}
    <Separator />
    {["undo", "redo"].map((t) => <Tool key={t} name={t} />)}
    <Separator />
    {["image", "table", "globe"].map((t) => <Tool key={t} name={t} />)}
    <ComboBox $width={143} $height={20} $gap={5} $font={13}>
      <Icon size={13} box={16}>{tools.fontFace}</Icon>
      <select aria-label="font"><option>Verdana</option></select>
      <Arrow />
    </ComboBox>
    <ComboBox $width={46} $height={23} $gap={2} $font={12}>
      <select aria-label="size"><option>五号</option></select>
      <Arrow />
    </ComboBox>
    <SplitTool>
      <Tool name="color" />
      <button aria-label="color menu"><Arrow /></button>
    </SplitTool>
    <SplitTool $hot>
      <Tool name="highlight" />
      <button aria-label="highlight menu"><Arrow /></button>
      <Tooltip role="tooltip">文本背景颜色 (K)</Tooltip>
    </SplitTool>
    <Separator />
    <ToolButton><Letter>B</Letter></ToolButton>
    <ToolButton><Letter><em>I</em></Letter></ToolButton>
    <ToolButton><Letter><u>U</u></Letter></ToolButton>
    <ToolButton><Letter>X<sub>2</sub></Letter></ToolButton>
    <ToolButton><Letter>X<sup>2</sup></Letter></ToolButton>
    <Separator />
    <Tool name="left" active />
    {["center", "right", "justify"].map((t) => <Tool key={t} name={t} />)}
    <Separator />
    {["outdent", "indent"].map((t) => <Tool key={t} name={t} />)}
    <Separator />
    {["numbered", "bullets"].map((t) => <Tool key={t} name={t} />)}
  </EditorBar>
);

const App = () => {
  return (
    <AppStyled>
      <GlobalStyle />
      <TitleBar>
        <Icon size={16}>
          <rect width="16" height="16" rx="3" fill="#3f68b4" />
          <path d="M0 10q2 5 8 6H3q-3 0-3-3z" fill="#f0912d" />
          <text x="1" y="12" fontSize="11" fontStyle="italic" fontWeight="700" fill="#fff" fontFamily="Liberation Serif">Ne</text>
        </Icon>
        <h1>NoteExpress - 中国地质大学(武汉)图书馆 - C:\Users\Aayu\Documents\NoteExpress\Libraries\示例数据库.ndb</h1>
        <WindowButton aria-label="minimize">
          <Icon size={10}><path d="M0 5.500h10" stroke="#000" /></Icon>
        </WindowButton>
        <WindowButton aria-label="restore">
          <Icon size={10}><path d="M0.500 2.500h7v7h-7zM2.500 2.500v-2h7v7h-2" stroke="#000" /></Icon>
        </WindowButton>
        <WindowButton aria-label="close">
          <Icon size={10}><path d="M0 0l10 10M10 0L0 10" stroke="#000" /></Icon>
        </WindowButton>
      </TitleBar>

      <Ribbon>
        <Grip />
        <RibbonItems>
          {ribbon.map(([name, label, menu]) => (
            <RibbonItem key={name} $menu={menu}>
              <span>
                <Icon>{ribbonIcons[name]}</Icon>
                {menu && <Arrow />}
              </span>
              {label}
            </RibbonItem>
          ))}
        </RibbonItems>
        <SearchBox>
          <Icon size={14}>
            <circle cx="5" cy="5" r="4" stroke="#4a4a4a" strokeWidth="2" />
            <path d="M8 8l5 5" stroke="#4a4a4a" strokeWidth="2.400" />
          </Icon>
          <input placeholder="在全部文件夹中检索" aria-label="在全部文件夹中检索" />
        </SearchBox>
        <ChevronButton aria-label="search scope">
          <Icon size={12}><path d="M1 3.500l5 4.500 5-4.500" stroke="#6c6c6c" strokeWidth="3" /></Icon>
        </ChevronButton>
        <Grip />
        <Account>15623301716 <Arrow w={4} /></Account>
        <Avatar aria-label="account">
          <Icon size={14}>
            <circle cx="7" cy="3" r="2.500" stroke="#6f9fe8" />
            <path d="M1 13q2-4 6-4t6 4" stroke="#6f9fe8" />
          </Icon>
        </Avatar>
        <UploadButton>
          <svg width="29" height="23" viewBox="0 0 29 23" fill="none" stroke="#fff" strokeWidth="2.600">
            <circle cx="9.500" cy="13.500" r="3.500" />
            <circle cx="14.500" cy="7.500" r="3.500" />
            <circle cx="19.500" cy="13.500" r="3.500" />
          </svg>
          <span>拖拽上传</span>
        </UploadButton>
      </Ribbon>

      <Main>
        <Sidebar>
          <PanelHeader>文件夹</PanelHeader>
          <TreeList>
            {tree.map(([guides, icon, label]) => (
              <TreeRow key={label} $root={icon === "database"} $selected={label === "外文"}>
                {guides.split("").map((g, i) => <Guide key={i} kind={g} />)}
                <Icon size={16}>{treeIcons[icon]}</Icon>
                <span>{label}</span>
              </TreeRow>
            ))}
          </TreeList>
          <Splitter />
          <TagBar>
            <label htmlFor="tags">标签云</label>
            <input id="tags" />
            <button aria-label="tag menu"><Arrow w={9} color="#333" /></button>
          </TagBar>
          <TagCloud>NoteExpress   使用手册</TagCloud>
        </Sidebar>

        <Splitter $vertical $size={5} $grip={58} />

        <Content>
          <ContentHeader>
            <h2>题录</h2>
            <span>1 / 222</span>
          </ContentHeader>
          <RecordList />
          <Splitter />
          <TabBar role="tablist">
            <Tab role="tab" $divider>细节</Tab>
            <Tab role="tab" $divider>预览</Tab>
            <Tab role="tab" $divider>综述</Tab>
            <Tab role="tab">附件</Tab>
            <Tab role="tab" $active>笔记<TabMark /></Tab>
            <Tab role="tab">位置</Tab>
          </TabBar>
          <EditorToolbar />
          <NotesArea>
            <NoteList>
              <NoteItem>Gestures and m...</NoteItem>
            </NoteList>
            <Splitter $vertical $size={6} $grip={18} />
            <Editor>
              <Page><PageMark /></Page>
              <Scrollbar $pad="3px 0">
                <Icon size={10}><path d="M1 8l4-5 4 5z" fill="#a3a3a3" /></Icon>
                <Icon size={10}><path d="M1 2l4 5 4-5z" fill="#a3a3a3" /></Icon>
              </Scrollbar>
            </Editor>
          </NotesArea>
        </Content>
      </Main>

      <StatusBar>
        <StatusCell $width={12} />
        <StatusCell $width={22} />
        <StatusCell $width={2} />
        <StatusButton aria-label="ready">
          <Icon size={14}>
            <circle cx="7" cy="7" r="6.500" fill="#7cb80d" stroke="#39630a" />
            <path d="M3.500 7l2.500 2.500 4.500-4.500" stroke="#fff" strokeWidth="1.800" />
          </Icon>
        </StatusButton>
        <StatusButton aria-label="stop" $boxed>
          <Icon size={16}>
            <circle cx="8" cy="8" r="7.500" fill="#ea6d0c" stroke="#b04e08" />
            <rect x="6" y="6" width="4" height="4" fill="#fff" />
          </Icon>
        </StatusButton>
      </StatusBar>
    </AppStyled>
  );
};

export default App;
